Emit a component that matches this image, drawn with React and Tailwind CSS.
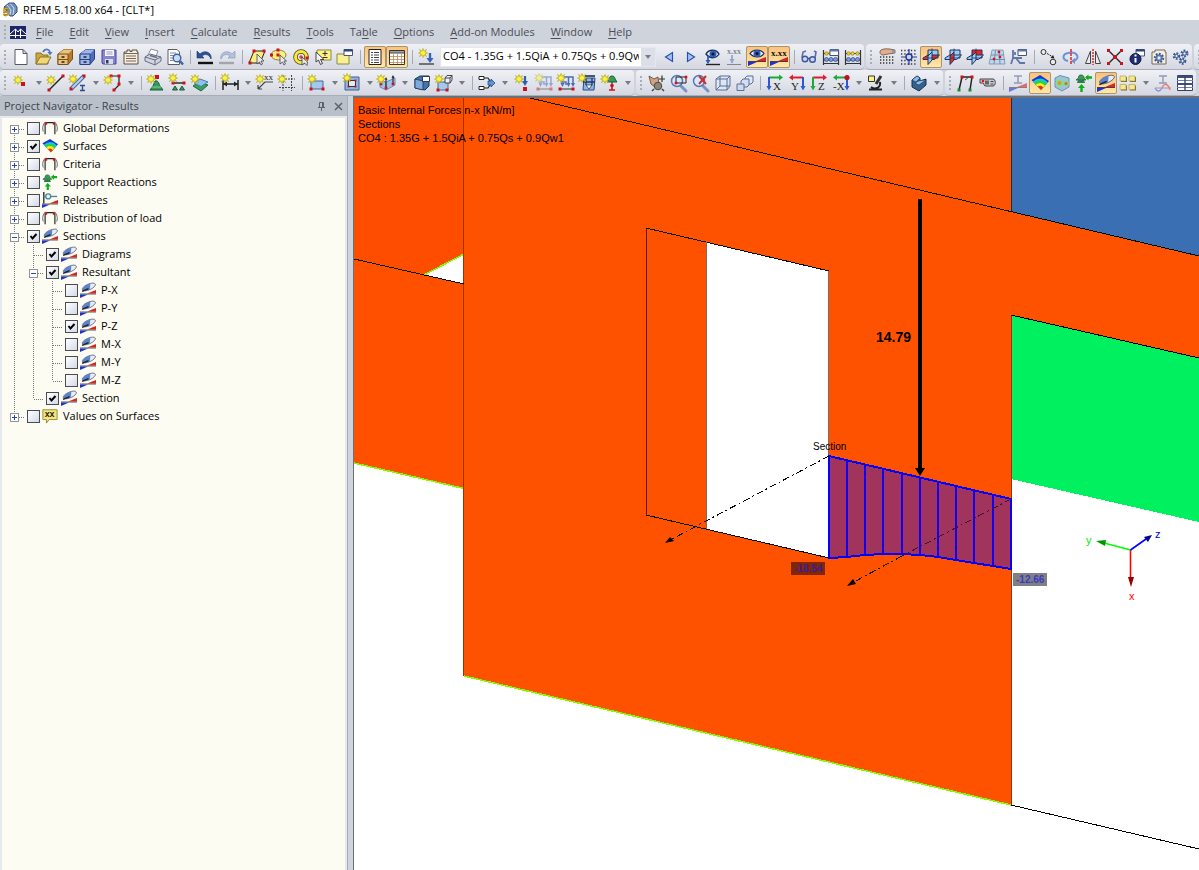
import React from 'react';
import clsx from 'clsx';

const Star = ({ x = 5, y = 5 }) => (
  <path
    transform={`translate(${x} ${y})`}
    d="M0-4.5L1-1.8L3.5-3.5L2-1L4.5 0L2 1L3.5 3.5L1 1.8L0 4.5L-1 1.8L-3.5 3.5L-2 1L-4.5 0L-2-1L-3.5-3.5L-1-1.8Z"
    fill="#fff23a"
    stroke="#b3a924"
    strokeWidth="0.7"
  />
);

const Dot = ({ x, y, s = 3, fill = '#d0101c' }) => (
  <rect x={x - s / 2} y={y - s / 2} width={s} height={s} fill={fill} />
);

const Slope = ({ y = 14 }) => (
  <>
    <path d={`M2 ${y + 5}V${y + 1}H11Z`} fill="#2030d8" />
    <path d={`M20 ${y - 4}V${y}H10Z`} fill="#e02020" />
    <path d={`M2 ${y + 0.5}H20`} stroke="#444" />
  </>
);

const Cabinet = ({ light, mid, dark }) => (
  <>
    <path d="M4 8L10 3.5H18.5V13L14 18.5H4Z" fill={mid} stroke={dark} />
    <path d="M4 8L10 3.5H18.5L14 8Z" fill={light} />
    <path d="M4 8H14V18.5H4Z" fill={light} stroke={dark} />
    <path d="M4 13.5H14" stroke={dark} />
    <path d="M7.5 11H10.5M7.5 16H10.5" stroke="#222" strokeWidth="1.6" />
  </>
);

const Planes = ({ a = '#9ccbf2', b = '#9ccbf2', c = '#9ccbf2' }) => (
  <>
    <path d="M8 4H18V12H8Z" fill={a} stroke="#1d3560" />
    <path d="M3 12L8 9H19.5L14.5 13.5H3Z" fill={b} stroke="#1d3560" />
    <path d="M8 10L12 6V14L8 18.5Z" fill={c} stroke="#1d3560" />
    <path d="M12 6V2.5M8 12H16" stroke="#1d3560" strokeWidth="0.8" />
  </>
);

const Lens = () => (
  <>
    <path d="M13 14L18 19" stroke="#7a93c4" strokeWidth="3" strokeLinecap="round" />
    <circle cx="9" cy="9" r="5.5" fill="#dbe8fa" stroke="#5a79b3" strokeWidth="1.5" />
  </>
);

const Abacus = () => (
  <>
    <path d="M3.5 4V19M18.5 4V19M3 7.5H19M3 14H19M3 17.5H19" stroke="#333" strokeWidth="1.2" />
    <circle cx="6.5" cy="7.5" r="1.7" fill="#f2d02c" stroke="#7b6a10" strokeWidth="0.6" />
    <circle cx="10.5" cy="7.5" r="1.7" fill="#f2d02c" stroke="#7b6a10" strokeWidth="0.6" />
    <circle cx="15.5" cy="7.5" r="1.7" fill="#f2d02c" stroke="#7b6a10" strokeWidth="0.6" />
    <circle cx="6.5" cy="13.5" r="2" fill="#7f9ee0" stroke="#2a4388" strokeWidth="0.7" />
    <circle cx="11" cy="13.5" r="2" fill="#7f9ee0" stroke="#2a4388" strokeWidth="0.7" />
    <circle cx="15.5" cy="13.5" r="2" fill="#7f9ee0" stroke="#2a4388" strokeWidth="0.7" />
  </>
);

const Loads = ({ dim }) => (
  <g opacity={dim ? 0.5 : 1}>
    <path d="M9 5H18V13M13.5 5V13M6 10H11V13" stroke="#4a6cb8" strokeWidth="1.5" fill="none" />
    <path d="M11.5 11L13.5 15L15.5 11ZM16 11L18 15L20 11ZM5.5 11L7.5 15L9.5 11Z" fill="#4a6cb8" />
    <path d="M5 17H18" stroke="#333" />
    <Dot x={5} y={17} />
    <Dot x={18} y={17} />
    <Star x={6} y={6} />
  </g>
);

const Axis = ({ label, h, v, flip, x }) => (
  <>
    <path d={flip ? 'M17 5.5H5' : 'M5 5.5H17'} stroke={h} strokeWidth="2" />
    <path d={flip ? 'M3 5.5L7 2.5V8.5Z' : 'M19 5.5L15 2.5V8.5Z'} fill={h} />
    <path d={flip ? 'M17 5V15' : 'M5 5V15'} stroke={v} strokeWidth="2" />
    <path d={flip ? 'M14.5 14H19.5L17 18.5Z' : 'M2.5 14H7.5L5 18.5Z'} fill={v} />
    <text x={x} y="18" fontSize="11" fontFamily="Liberation Serif, serif" fill="#222">{label}</text>
  </>
);

const SupportShape = () => (
  <>
    <path d="M8 3C10 3 11 4 11 6L13 8H3L5.5 6C5.5 4 6 3 8 3Z" fill="#3c9a5b" stroke="#1f5d35" strokeWidth="0.8" />
    <path d="M5 8L4 11H12L11 8Z" fill="#2e7d48" />
    <path d="M13 5.5H19M8.5 20V14" stroke="#0fae14" strokeWidth="2.4" />
    <path d="M12 5.5L15.5 2.5V8.5ZM5 16L8.5 12L12 16Z" fill="#0fae14" />
  </>
);

const Rainbow = () => (
  <>
    <path d="M2.5 8L11 3L20 9L12 18Z" fill="#1737d0" />
    <path d="M3.8 9.5Q12 3 18.7 10.3L12 18Z" fill="#19c4e0" />
    <path d="M5 10.8Q12 6 17.4 11.8L12 18Z" fill="#2bd42f" />
    <path d="M6.8 12.5Q12 9 15.8 13.5L12 18Z" fill="#f6ec1c" />
    <path d="M8.8 14.6Q12 12.5 14.2 15.5L12 18Z" fill="#ee2a12" />
  </>
);

const Blade = () => (
  <>
    <Slope y={15} />
    <g transform="rotate(-24 11 8)">
      <ellipse cx="12" cy="8" rx="8" ry="3.2" fill="#e6ecfa" stroke="#555b68" strokeWidth="0.8" />
      <path d="M4 8C5 5 11 4 15 5.5L12 10.8C8 11.5 5 10 4 8Z" fill="#5e82cc" />
      <path d="M3 9.5H11" stroke="#222" strokeWidth="1.6" />
    </g>
  </>
);

const Frame = () => (
  <>
    <path d="M5.5 18V8C5.5 6 6 5 8 5H14C16 5 16.5 6 16.5 8V18" fill="none" stroke="#222" strokeWidth="1.3" />
    <path d="M3.5 15C2 11 3 7 6 4M18.5 15C20 11 19 7 16 4" fill="none" stroke="#444" strokeWidth="0.9" />
    <Dot x={6.5} y={6} s={2.6} />
    <Dot x={15.5} y={6} s={2.6} />
  </>
);

const Gear = ({ x, y, r = 4, fill = '#6f8fc8' }) => (
  <>
    <circle cx={x} cy={y} r={r} fill="none" stroke="#3a5590" strokeWidth="2" strokeDasharray="1.8 1.4" />
    <circle cx={x} cy={y} r={r - 1} fill={fill} stroke="#3a5590" strokeWidth="0.8" />
    <circle cx={x} cy={y} r={r / 3} fill="#eef3fb" />
  </>
);

// 22 x 22 drawings, one per toolbar command
const ICONS = {
  new: <path d="M5 3.5H13L17 7.5V18.5H5ZM13 3.5V7.5H17" fill="#fff" stroke="#55585f" />,
  open: (
    <>
      <path d="M4 18V7H9L11 9H16V18Z" fill="#c9a93e" stroke="#8a7328" />
      <path d="M4 18L8 11H19L15 18Z" fill="#f0d777" stroke="#8a7328" />
      <path d="M11 6C13 2 17 3 18 6" stroke="#5577b5" strokeWidth="1.8" fill="none" />
      <path d="M15.5 6H20.5L18 9.5Z" fill="#5577b5" />
    </>
  ),
  cabinet: <Cabinet light="#edc27c" mid="#b87b2e" dark="#7a4f17" />,
  cabinetBlue: <Cabinet light="#9fb6ea" mid="#4f6fbd" dark="#283f86" />,
  save: (
    <>
      <path d="M4 4H18V18H5L4 17Z" fill="#8a83cf" stroke="#4b458d" />
      <path d="M7 4H16V10H7Z" fill="#f4f6fb" />
      <path d="M8.5 6H14.5M8.5 8H14.5" stroke="#9aa0b5" />
      <path d="M7 13H15V18H7Z" fill="#d8dbe8" />
      <path d="M8 14H10.5V17.5H8Z" fill="#333a60" />
    </>
  ),
  book: (
    <>
      <path d="M4 6H7V4H10V5.5H12V4H17V6H18V18H4Z" fill="#f6efdf" stroke="#5c4e40" />
      <path d="M4 7.5H18M6 10H16M6 12.5H16M6 15H16" stroke="#75675a" />
    </>
  ),
  print: (
    <>
      <path d="M6 9L9 3L16 5L14 10Z" fill="#fff" stroke="#8a8d98" />
      <path d="M3 11L8 8L19 11V15L13 19L3 15Z" fill="#d3d6e2" stroke="#6a6d80" />
      <path d="M3 11L13 14L19 11" stroke="#6a6d80" fill="none" />
      <path d="M13 14V19" stroke="#6a6d80" />
      <path d="M8 9.5L15 11.5" stroke="#6a6d80" strokeWidth="1.4" />
    </>
  ),
  preview: (
    <>
      <path d="M4 3.5H13L15.5 6V18.5H4Z" fill="#fff" stroke="#5b5e68" />
      <path d="M6 7H12M6 9.5H11M6 12H9M6 14.5H9" stroke="#7b86a4" />
      <circle cx="13" cy="12" r="3.8" fill="#c5dcf7" stroke="#41639f" strokeWidth="1.4" />
      <path d="M16 15L19 18.5" stroke="#41639f" strokeWidth="2.4" />
    </>
  ),
  undo: (
    <>
      <path d="M3 5V12H10L8 10C11 7.5 15 8 17 13C18.5 7 11 3 6 8Z" fill="#2d5296" stroke="#1b3566" strokeWidth="0.6" />
      <path d="M4 17H19" stroke="#111" strokeWidth="2.4" />
    </>
  ),
  redo: (
    <>
      <path d="M19 5V12H12L14 10C11 7.5 7 8 5 13C3.5 7 11 3 16 8Z" fill="#b5c2da" stroke="#7f90b0" strokeWidth="0.6" />
      <path d="M3 17H18" stroke="#a3a5ac" strokeWidth="2.4" />
    </>
  ),
  selectRhomb: (
    <>
      <path d="M8 5H19L14 17H3Z" fill="#fbef7e" stroke="#222" />
      <Dot x={8} y={5} /><Dot x={18} y={5} /><Dot x={4} y={17} />
      <path d="M11 8V18L13.5 16L15 19L16.5 18L15 15L18 15Z" fill="#e9e9ee" stroke="#444" strokeWidth="0.8" />
    </>
  ),
  selectEllipse: (
    <>
      <ellipse cx="10.5" cy="9" rx="7.5" ry="5" fill="#fbef7e" stroke="#8c8332" />
      <Dot x={10} y={9} /><Dot x={3.5} y={9} /><Dot x={10} y={4} />
      <path d="M12 9V18L14.5 16L16 19L17.5 18L16 15L18.5 15Z" fill="#e9e9ee" stroke="#444" strokeWidth="0.8" />
    </>
  ),
  selectRing: (
    <>
      <circle cx="11" cy="11" r="5.5" fill="none" stroke="#4a441a" strokeWidth="4.5" />
      <circle cx="11" cy="11" r="5.5" fill="none" stroke="#f8e83a" strokeWidth="3" />
      <path d="M11 9V13M9 11H13" stroke="#d0101c" />
      <Dot x={17} y={12} />
      <path d="M12 11V19L14.5 17L17 19.5L17.5 16Z" fill="#e9e9ee" stroke="#444" strokeWidth="0.8" />
    </>
  ),
  selectBox: (
    <>
      <path d="M5 4H19V14H5Z" fill="#fff37d" stroke="#8c8648" />
      <path d="M13 5V10M10.5 7.5H15.5M10.5 11.5H15.5" stroke="#333" />
      <path d="M4 6V16L6.5 14L8.5 18.5L10.5 17.5L8.5 13.5H12Z" fill="#f4f4f8" stroke="#333" strokeWidth="0.9" />
    </>
  ),
  selectLayer: (
    <>
      <path d="M3 8H15V18H3Z" fill="#f9f094" stroke="#8c8648" />
      <path d="M10 3.5H18.5V9.5H10Z" fill="#fff" stroke="#4a5470" />
      <path d="M10 4.5H18.5" stroke="#2c4372" strokeWidth="2" />
    </>
  ),
  list: (
    <>
      <path d="M5 3.5H17V18.5H5Z" fill="#fff" stroke="#222" />
      <path d="M7 6.5H9M7 9H9M7 11.5H9M7 14H9M7 16.5H9M10 6.5H15M10 9H15M10 11.5H15M10 14H15M10 16.5H15" stroke="#444" />
    </>
  ),
  table: (
    <>
      <path d="M3.5 4.5H18.5V18.5H3.5Z" fill="#fff" stroke="#333" />
      <path d="M4 6.5H18" stroke="#777" strokeWidth="2.4" />
      <path d="M4 10.5H18M4 13.5H18M4 16.5H18M7.5 8V18M11.5 8V18M15.5 8V18" stroke="#b98a55" strokeWidth="0.8" />
    </>
  ),
  loadCase: (
    <>
      <Star x={7} y={7} />
      <path d="M14 7V15" stroke="#3a63b5" strokeWidth="2.4" />
      <path d="M10.5 12H17.5L14 17Z" fill="#3a63b5" />
      <path d="M3 18H18" stroke="#444" strokeWidth="1.4" />
    </>
  ),
  prev: <path d="M7.5 11L14.5 6.5V15.5Z" fill="#a5c4f4" stroke="#2a4fae" strokeWidth="1.2" />,
  next: <path d="M14.5 11L7.5 6.5V15.5Z" fill="#a5c4f4" stroke="#2a4fae" strokeWidth="1.2" />,
  eyeLoad: (
    <>
      <path d="M4 8C7 3 14 3 17 8C14 13 8 13 4 8Z" fill="#eaf1fb" stroke="#1b2f5c" strokeWidth="1.4" />
      <circle cx="11" cy="8" r="3.5" fill="#2f5fb5" />
      <circle cx="11" cy="8" r="1.5" fill="#0a1430" />
      <path d="M6 10V17" stroke="#2f5fb5" strokeWidth="1.8" />
      <path d="M3.5 14H8.5L6 18Z" fill="#2f5fb5" />
      <path d="M4 18.5H18" stroke="#222" strokeWidth="1.4" />
    </>
  ),
  valueLoad: (
    <g opacity="0.55">
      <text x="3" y="8" fontSize="8" fontFamily="Liberation Serif, serif" fontWeight="bold" fill="#333">x.xx</text>
      <path d="M8 9V17" stroke="#5a76b0" strokeWidth="1.8" />
      <path d="M5.5 13H10.5L8 17.5Z" fill="#5a76b0" />
      <path d="M3 18.5H17" stroke="#444" />
    </g>
  ),
  eyeResult: (
    <>
      <Slope y={15} />
      <path d="M4 7.5C7 3 15 3 18 7.5C15 12 8 12 4 7.5Z" fill="#eaf1fb" stroke="#1b2f5c" strokeWidth="1.2" />
      <circle cx="11" cy="7.5" r="3.5" fill="#2f5fb5" />
      <circle cx="11" cy="7.5" r="1.5" fill="#0a1430" />
    </>
  ),
  valueResult: (
    <>
      <Slope y={15} />
      <text x="3" y="10" fontSize="9" fontFamily="Liberation Serif, serif" fontWeight="bold" fill="#111">x.xx</text>
    </>
  ),
  glasses: (
    <>
      <path d="M4 12L5 6L8 5M17 12L18 6L16 5" fill="none" stroke="#5a6fa8" strokeWidth="1.6" />
      <path d="M9.5 12.5H12" stroke="#32498c" strokeWidth="1.4" />
      <circle cx="7" cy="13" r="2.8" fill="#c7d8f4" stroke="#3f569a" strokeWidth="1.4" />
      <circle cx="14.5" cy="13.5" r="2.8" fill="#c7d8f4" stroke="#3f569a" strokeWidth="1.4" />
    </>
  ),
  abacusWin: (
    <>
      <Abacus />
      <path d="M10 3.5H18.5V9.5H10Z" fill="#fff" stroke="#4a5470" />
      <path d="M10 4.5H18.5" stroke="#5b76a8" strokeWidth="2" />
    </>
  ),
  abacus: <Abacus />,
  handGrid: (
    <>
      <path d="M4 11H19M4 14H19M4 17H19" stroke="#333" strokeWidth="1.3" strokeDasharray="1.3 1.7" />
      <path d="M5 4C9 2 14 3 19 4V7L12 8L7 9C4 9 3 6 5 4Z" fill="#e0ae8c" stroke="#6d4a36" strokeWidth="0.8" />
      <path d="M16 4H19V7H16Z" fill="#8a94ad" />
    </>
  ),
  snapGrid: (
    <>
      <path d="M3 4.5H19M3 8H19M3 14.5H19M3 18H19" stroke="#333" strokeWidth="1.3" strokeDasharray="1.3 2" />
      <path d="M11 3V19M3 11H19" stroke="#26379b" strokeWidth="1.2" />
      <circle cx="11" cy="11" r="3" fill="#c8d8f6" stroke="#26379b" strokeWidth="1.4" />
    </>
  ),
  planeXY: <Planes b="#e52b2b" />,
  planeYZ: <Planes c="#e52b2b" />,
  planeXZ: <Planes a="#f02020" />,
  grid3d: (
    <>
      <path d="M6 4L3 18H19L17 4Z" fill="#bcd8f0" stroke="#7b8ea5" strokeWidth="0.8" />
      <path d="M9.5 4L8 18M13 4L14 18M5 9H18M4 13.5H19" stroke="#7b8ea5" />
      <Dot x={13} y={6} s={2.4} /><Dot x={14} y={11} s={2.4} /><Dot x={8} y={13} s={2.4} />
    </>
  ),
  planeEdit: (
    <>
      <path d="M5 4V12H14M5 12L3 18M7 9V6M8 12L12 17H17" fill="none" stroke="#6075a8" strokeWidth="1.8" />
      <path d="M10 3.5H18.5V9.5H10Z" fill="#fff" stroke="#4a5470" />
      <path d="M10 4.5H18.5" stroke="#5b76a8" strokeWidth="2" />
    </>
  ),
  moveNode: (
    <>
      <circle cx="5.5" cy="6" r="2.5" fill="#e8eaf0" stroke="#333" />
      <circle cx="15" cy="16" r="2.8" fill="#e8eaf0" stroke="#333" />
      <path d="M9 7.5L15 11" stroke="#222" strokeDasharray="2 1" />
      <path d="M16.5 12.5L12.5 12L15 9Z" fill="#222" />
    </>
  ),
  rotate: (
    <>
      <path d="M8 15C2 14 2 8 8 7C17 5 21 12 14 15" fill="none" stroke="#6d92d4" strokeWidth="2" />
      <path d="M15 12V18L11 15Z" fill="#6d92d4" />
      <path d="M11 3V19" stroke="#e01818" strokeWidth="1.4" strokeDasharray="3 1" />
    </>
  ),
  mirror: (
    <>
      <path d="M8.5 5V17.5H3.5Z" fill="#e8eaf0" stroke="#444" />
      <path d="M13.5 5V17.5H18.5Z" fill="#e8eaf0" stroke="#444" />
      <path d="M11 3V19" stroke="#e01818" strokeWidth="1.4" strokeDasharray="2 1" />
    </>
  ),
  connect: (
    <>
      <path d="M4 4L18 18M18 4L4 18" stroke="#222" strokeWidth="1.4" />
      <Dot x={4.5} y={4.5} /><Dot x={17.5} y={4.5} /><Dot x={4.5} y={17.5} /><Dot x={17.5} y={17.5} />
      <Dot x={11} y={11} s={4} />
    </>
  ),
  info: (
    <>
      <path d="M10 3.5H18.5V10H10Z" fill="#fff" stroke="#4a5470" />
      <path d="M10 4.5H18.5" stroke="#2c4372" strokeWidth="2" />
      <circle cx="9.5" cy="13" r="5.5" fill="#1f2c6e" stroke="#0e173f" />
      <path d="M9.5 12V16.5M9.5 8.5V10.5" stroke="#fff" strokeWidth="2" />
    </>
  ),
  settingsBook: (
    <>
      <path d="M4 6H7V4H17V6H18V18H4Z" fill="#f6efdf" stroke="#75685a" />
      <Gear x={11} y={12} r={4.2} />
    </>
  ),
  gears: (
    <>
      <Gear x={6.5} y={10} r={2.8} />
      <Gear x={14.5} y={7.5} r={3} />
      <Gear x={12.5} y={15} r={2.8} />
    </>
  ),
  node: (<><Star x={8} y={8} /><Dot x={13} y={12} s={4} /></>),
  line: (
    <>
      <path d="M4 18L18 4" stroke="#222" strokeWidth="1.4" />
      <Dot x={4} y={18} /><Dot x={18} y={4} />
      <Star x={6} y={8} />
    </>
  ),
  member: (
    <>
      <path d="M4 17L17 4" stroke="#47669e" strokeWidth="4" />
      <path d="M4 17L17 4" stroke="#b9d3f4" strokeWidth="2" />
      <Dot x={4} y={17} /><Dot x={17} y={4} />
      <path d="M13 13.5H18M13 18.5H18M15.5 13.5V18.5" stroke="#2c4d92" strokeWidth="1.4" />
      <Star x={6} y={7} />
    </>
  ),
  polyline: (
    <>
      <path d="M8 4H17V13L12 18" fill="none" stroke="#222" strokeWidth="1.2" />
      <Dot x={9} y={4} /><Dot x={17} y={4} /><Dot x={17} y={12} /><Dot x={12} y={18} />
      <Star x={6} y={8} />
    </>
  ),
  nodalSupport: (
    <>
      <path d="M10 9C14 8 14 13 15 14L18 18H5L8 14Z" fill="#37995c" stroke="#1c5c33" />
      <path d="M6 15H16" stroke="#7fd49b" />
      <Dot x={12} y={5} s={4} />
      <Star x={6} y={7} />
    </>
  ),
  lineSupport: (
    <>
      <path d="M5 11H18" stroke="#222" strokeWidth="1.4" />
      <Dot x={6} y={11} /><Dot x={17} y={11} />
      <path d="M8 14L10.5 18H5.5ZM15 14L17.5 18H12.5Z" fill="#37995c" stroke="#1c5c33" />
      <Star x={6} y={6} />
    </>
  ),
  surfaceSupport: (
    <>
      <path d="M4 14L10 10L19 13L12 19Z" fill="#37a05c" stroke="#1c6b38" />
      <path d="M5 11L11 7L19 10L12 14.5Z" fill="#8dc2ee" stroke="#4a7cb4" />
      <Star x={6} y={7} />
    </>
  ),
  dimension: (
    <>
      <path d="M4 8V18M19 8V18M4 12H19" stroke="#222" strokeWidth="1.5" />
      <path d="M4 12L8 9.5V14.5ZM19 12L15 9.5V14.5Z" fill="#222" />
      <text x="9" y="9" fontSize="9" fontWeight="bold" fontFamily="Liberation Sans, sans-serif">x</text>
      <Star x={6} y={6} />
    </>
  ),
  comment: (
    <>
      <path d="M4 17L11 10H19M4 17V13M4 17H8" stroke="#444" fill="none" strokeWidth="1.2" />
      <text x="10" y="8" fontSize="9" fontFamily="Liberation Serif, serif" fill="#222">xx</text>
      <Star x={6} y={7} />
    </>
  ),
  guides: (
    <>
      <path d="M7 3V19M15.5 3V19M3 7H19M3 15.5H19" stroke="#444" strokeDasharray="2 1" />
      <Star x={6} y={7} />
    </>
  ),
  surface: (
    <>
      <path d="M5 9H17V17H5Z" fill="#a5c9ec" stroke="#47699c" />
      <Dot x={5} y={17} /><Dot x={17} y={17} />
      <Star x={6} y={7} />
    </>
  ),
  opening: (
    <>
      <path d="M4 5H18V18H4Z" fill="#8fb6e0" stroke="#3f6192" />
      <path d="M7.500 8.500H14.500V14.500H7.500Z" fill="#e6eaf3" stroke="#333" />
      <Dot x={7.5} y={8.5} s={2} /><Dot x={14.5} y={8.5} s={2} /><Dot x={7.5} y={14.5} s={2} /><Dot x={14.5} y={14.5} s={2} />
      <Star x={6} y={6} />
    </>
  ),
  rotateSurface: (
    <>
      <path d="M4 8L10 10V18L4 15ZM10 10L19 6V13L10 18Z" fill="#9fc2e8" stroke="#6a8ab5" />
      <path d="M10 6V15M17 4V12" stroke="#333" strokeWidth="1.2" />
      <path d="M8.5 8H11.500L10 5ZM15.500 6H18.500L17 3Z" fill="#333" />
      <Dot x={10} y={16} s={2.6} /><Dot x={5} y={12} s={2.6} /><Dot x={17} y={12} s={2.6} />
      <Star x={5} y={7} />
    </>
  ),
  solid: (
    <>
      <path d="M4 7L9 4H18V14L14 18L4 16Z" fill="#4673ac" stroke="#183458" />
      <path d="M4 7L12 9V18L4 16Z" fill="#7ea9dc" stroke="#183458" strokeWidth="0.8" />
      <path d="M11.5 4.5H18.5V9.5H11.5Z" fill="#fff" stroke="#333b52" />
    </>
  ),
  solidNew: (
    <>
      <path d="M5 10H15V18H5Z" fill="#a5c9ec" stroke="#47699c" />
      <path d="M12 6L14 3.5H19V8L17 11H12ZM12 6H17V11M17 6L19 3.5" fill="#eef3fa" stroke="#333" strokeWidth="0.9" />
      <Dot x={5} y={18} /><Dot x={14} y={18} />
      <Star x={6} y={7} />
    </>
  ),
  merge: (
    <>
      <path d="M3 4.5H8V7.5H3ZM3 14.5H8V17.500H3Z" fill="#fff" stroke="#222" />
      <path d="M8 6H12L14 9M8 16H12L14 13" fill="none" stroke="#222" strokeWidth="1.2" />
      <path d="M12 9H15V7L19 11L15 15V13H12Z" fill="#5b95dc" stroke="#1f4c8c" strokeWidth="0.8" />
    </>
  ),
  nodalLoad: (
    <>
      <path d="M14 4V11" stroke="#2f5fb5" strokeWidth="2.2" />
      <path d="M11 9H17L14 14Z" fill="#2f5fb5" />
      <Dot x={14} y={17} s={4} />
      <Star x={8} y={7} />
    </>
  ),
  memberLoad: <Loads dim />,
  lineLoad: <Loads />,
  surfaceLoad: (
    <>
      <path d="M7 6H18L17 18H6Z" fill="#8fb6e6" stroke="#2a4a7e" />
      <path d="M6 10H18M9 6V13M15 6V13" stroke="#23385f" strokeWidth="1.3" />
      <path d="M9 13H15L12 17Z" fill="#fff" stroke="#12233f" strokeWidth="0.7" />
      <path d="M8 4H18" stroke="#12233f" strokeWidth="1.5" />
      <Star x={5} y={6} />
    </>
  ),
  imposed: (
    <>
      <path d="M10 7C10 3 16 3 16 7L18 10H8Z" fill="#37995c" stroke="#1c5c33" />
      <path d="M13 10V14" stroke="#222" />
      <circle cx="13" cy="13.5" r="1.8" fill="#d0101c" />
      <path d="M10 18H16M13 13V18" stroke="#d0101c" strokeWidth="1.6" />
      <Star x={6} y={7} />
    </>
  ),
  pan: (
    <>
      <path d="M3 4L8 7L12 5L13 12L9 15L5 12Z" fill="#cfa582" stroke="#6d4a36" strokeWidth="0.9" />
      <path d="M16 3.500V10M13 7H19" stroke="#333" strokeWidth="1.2" />
      <circle cx="12" cy="14" r="3.8" fill="#8c867c" stroke="#4d4942" />
      <path d="M8 17L6 19M16 17L18 19" stroke="#444" strokeWidth="1.5" />
    </>
  ),
  zoomWindow: (<><Lens /><path d="M8 5H18V11H8Z" fill="none" stroke="#222" /><Dot x={8} y={11} s={2.6} /><Dot x={18} y={5} s={2.6} /></>),
  zoomOff: (<><Lens /><path d="M9 4L16 12M16 4L9 12" stroke="#c83030" strokeWidth="2" /></>),
  cube: (
    <path d="M4 7L8 4H18V14L15 18H4ZM4 7H15V18M15 7L18 4M8 4V14H18M4 18L8 14" fill="#dfe7f5" stroke="#5c6e95" />
  ),
  boxes: (
    <>
      <path d="M11 6L13 4H19V10L17 12H11Z" fill="#e0e7f5" stroke="#5c6e95" />
      <path d="M7 9L9 7H15V13L13 15H7Z" fill="#d5def0" stroke="#5c6e95" />
      <path d="M3 12H10V18.500H3Z" fill="#cfd9ee" stroke="#5c6e95" />
    </>
  ),
  viewX: <Axis label="X" h="#1fa83c" v="#2b57d8" x={9} />,
  viewY: <Axis label="Y" h="#dc2030" v="#2b57d8" flip x={5} />,
  viewZ: <Axis label="Z" h="#dc2030" v="#1fa83c" x={10} />,
  viewMinusX: (
    <>
      <Axis label="-X" h="#1fa83c" v="#2b57d8" flip x={3} />
      <circle cx="17" cy="5.5" r="2.6" fill="#c01020" />
    </>
  ),
  microscope: (
    <>
      <path d="M4 17.5H17M6 15C10 18 16 16 15 10" fill="none" stroke="#222" strokeWidth="2" />
      <path d="M16 4L11 12" stroke="#333" strokeWidth="3" />
      <path d="M3.5 4H9.5V9.5H3.5Z" fill="#fff37d" stroke="#333" />
    </>
  ),
  clip: (
    <>
      <path d="M4 8L9 4L12 6V9L18 7V13L11 19L4 15Z" fill="#35628f" stroke="#15304f" />
      <path d="M4 8L9 4L12 6L8 10Z" fill="#8dbce6" stroke="#15304f" strokeWidth="0.6" />
      <path d="M8 10L12 8.500L18 8L11 13L8 12Z" fill="#8dbce6" stroke="#15304f" strokeWidth="0.6" />
    </>
  ),
  frame: (
    <>
      <path d="M4 18L7 5H17L15 18" fill="none" stroke="#222" strokeWidth="1.5" />
      <path d="M10 8L14 5" stroke="#555" />
      <Dot x={7} y={5} /><Dot x={17} y={5} />
      <Dot x={4} y={18} fill="#188a2c" /><Dot x={15} y={18} fill="#188a2c" />
    </>
  ),
  record: (
    <>
      <path d="M3 7H16C19 7 19 14 16 14H8L6 11H3Z" fill="#c9cad2" stroke="#444" />
      <path d="M8 8.500H12V12.500H8Z" fill="#666" />
      <circle cx="6" cy="9" r="1.3" fill="#e11" />
      <path d="M13.500 9.500H16.500M13.500 12H16.500" stroke="#444" />
    </>
  ),
  memberResult: (
    <g opacity="0.6">
      <path d="M7 4H15M11 4V11M7 11H15" stroke="#5c6e95" strokeWidth="1.6" />
      <Slope y={15} />
    </g>
  ),
  surfaceResult: <Rainbow />,
  solidResult: (
    <>
      <path d="M4 6L9 3.5L18 6V15L11 19L4 15Z" fill="#9dc3d8" stroke="#6c93ad" />
      <circle cx="8.5" cy="11" r="3.8" fill="#7fe08a" />
      <circle cx="8.5" cy="11" r="2" fill="#f28a3a" />
      <circle cx="15" cy="11.5" r="2.8" fill="#7fe08a" />
      <circle cx="15" cy="11.5" r="1.5" fill="#e85a3a" />
    </>
  ),
  supportResult: <SupportShape />,
  sectionResult: <Blade />,
  panels: (
    <>
      <path d="M4 5H10V10H4ZM13 5H19V10H13ZM4 13.5H10V18.5H4ZM13 13.5H19V18.5H13Z" fill="#7a6d2c" />
      <path d="M3 4H9V9H3ZM12 4H18V9H12ZM3 12.5H9V17.5H3ZM12 12.5H18V17.5H12Z" fill="#f6e68c" stroke="#a89a4a" strokeWidth="0.6" />
    </>
  ),
  waveResult: (
    <>
      <path d="M7 4H15M11 4V11M7 11H15" stroke="#8f9bb5" strokeWidth="1.4" />
      <path d="M3 16H19" stroke="#9a9da8" />
      <path d="M3 16C5 20 8 20 10 16" fill="none" stroke="#8c8ce6" strokeWidth="1.3" />
      <path d="M10 16C12 11 16 11 18 18" fill="none" stroke="#e67c7c" strokeWidth="1.3" />
    </>
  ),
  tables: (
    <>
      <path d="M3.5 3.5H18.5V18.5H3.5Z" fill="#fff" stroke="#3a4260" />
      <path d="M3 5H19M3 12H19" stroke="#3c4c84" strokeWidth="2" />
      <path d="M3 8.500H19M3 15.500H19" stroke="#6c7cb4" />
      <path d="M11 3V19" stroke="#3a4260" strokeWidth="1.4" />
    </>
  ),
};

// "|" separator, "v" drop-down arrow, "*" in front of a pressed button
const FILE_BAR = ['new', 'open', 'cabinet', 'cabinetBlue', 'save', 'book', 'print', 'preview', '|', 'undo', 'redo', '|', 'selectRhomb', 'selectEllipse', 'selectRing', 'selectBox', 'selectLayer', '|', '*list', '*table', '|', 'loadCase', 'combo', 'prev', 'next', 'eyeLoad', 'valueLoad', '*eyeResult', '*valueResult', '|', 'glasses', 'abacusWin', 'abacus'];
const PLANE_BAR = ['handGrid', 'snapGrid', '*planeXY', 'planeYZ', 'planeXZ', 'grid3d', 'planeEdit', '|', 'moveNode', 'rotate', 'mirror', 'connect', 'info', 'settingsBook', 'gears'];
const INSERT_BAR = ['node', 'v', 'line', 'member', 'v', 'polyline', 'v', '|', 'nodalSupport', 'lineSupport', 'surfaceSupport', '|', 'dimension', 'v', 'comment', 'guides', '|', 'surface', 'v', 'opening', 'v', 'rotateSurface', 'v', 'solid', 'solidNew', 'v', '|', 'merge', 'v', 'nodalLoad', 'memberLoad', 'lineLoad', 'surfaceLoad', 'imposed', 'v'];
const VIEW_BAR = ['pan', 'zoomWindow', 'zoomOff', 'cube', 'boxes', '|', 'viewX', 'viewY', 'viewZ', 'viewMinusX', 'v', 'microscope', 'v', '|', 'clip', 'v'];
const RESULT_BAR = ['frame', 'record', '|', 'memberResult', '*surfaceResult', 'solidResult', 'supportResult', '*sectionResult', 'panels', 'v', 'waveResult', 'tables'];

const MENU = [
  ['', 'F', 'ile'], ['', 'E', 'dit'], ['', 'V', 'iew'], ['', 'I', 'nsert'], ['', 'C', 'alculate'], ['', 'R', 'esults'],
  ['', 'T', 'ools'], ['Ta', 'b', 'le'], ['', 'O', 'ptions'], ['', 'A', 'dd-on Modules'], ['', 'W', 'indow'], ['', 'H', 'elp'],
];

// guides: one letter per 19px column
// l line, t tee, e end, f first expander, + closed, - open, _ last expander
const TREE = [
  { guides: 'f', icon: 'frame', label: 'Global Deformations' },
  { guides: '+', icon: 'surface', label: 'Surfaces', on: true },
  { guides: '+', icon: 'frame', label: 'Criteria' },
  { guides: '+', icon: 'support', label: 'Support Reactions' },
  { guides: '+', icon: 'release', label: 'Releases' },
  { guides: '+', icon: 'frame', label: 'Distribution of load' },
  { guides: '-', icon: 'section', label: 'Sections', on: true },
  { guides: 'lt', icon: 'section', label: 'Diagrams', on: true },
  { guides: 'l-', icon: 'section', label: 'Resultant', on: true },
  { guides: 'llt', icon: 'section', label: 'P-X' },
  { guides: 'llt', icon: 'section', label: 'P-Y' },
  { guides: 'llt', icon: 'section', label: 'P-Z', on: true },
  { guides: 'llt', icon: 'section', label: 'M-X' },
  { guides: 'llt', icon: 'section', label: 'M-Y' },
  { guides: 'lle', icon: 'section', label: 'M-Z' },
  { guides: 'le', icon: 'section', label: 'Section', on: true },
  { guides: '_', icon: 'values', label: 'Values on Surfaces' },
];

const TREE_ICONS = {
  frame: <Frame />,
  surface: <Rainbow />,
  support: <SupportShape />,
  release: (
    <>
      <Slope y={15} />
      <path d="M4 2V15" stroke="#333" strokeWidth="1.6" />
      <path d="M4 7H19" stroke="#4d8b96" strokeWidth="1.6" />
      <circle cx="9" cy="7" r="2.8" fill="#e6f3f5" stroke="#4d8b96" strokeWidth="1.5" />
    </>
  ),
  section: <Blade />,
  values: (
    <>
      <path d="M3 4H19V15H10L7 19V15H3Z" fill="#f5e678" stroke="#8f8433" />
      <text x="5" y="12.5" fontSize="10" fontWeight="bold" fontFamily="Liberation Sans, sans-serif" fill="#222">xx</text>
    </>
  ),
};

const Grip = () => (
  <span className="flex w-[10px] shrink-0 flex-col items-center gap-0.5">
    {[0, 1, 2, 3].map((i) => (
      <span key={i} className="size-0.5 bg-[#a9adb6]" />
    ))}
  </span>
);

const Combo = () => (
  <div className="mx-0.5 flex h-5 w-[216px] shrink-0 border border-[#e4e7ed] bg-white">
    <select
      aria-label="Load combination"
      className="min-w-0 flex-1 appearance-none overflow-hidden bg-white px-0.5 text-[11px] whitespace-nowrap text-black outline-none"
    >
      <option>CO4 - 1.35G + 1.5QiA + 0.75Qs + 0.9Qw1</option>
    </select>
    <span className="flex w-[14px] items-center justify-center bg-[#dcdfe7]">
      <svg viewBox="0 0 6 4" className="h-1 w-1.5"><path d="M0 0H6L3 4Z" fill="#777b84" /></svg>
    </span>
  </div>
);

const ToolItem = ({ item }) => {
  if (item === '|') {
    return <span className="flex w-2 shrink-0 justify-center"><span className="h-[14px] w-px bg-[#a6aab4]" /></span>;
  }
  if (item === 'v') {
    return (
      <button aria-label="More" className="flex h-[22px] w-[13px] shrink-0 items-center justify-center">
        <svg viewBox="0 0 6 4" className="h-1 w-1.5"><path d="M0 0H6L3 4Z" fill="#777b84" /></svg>
      </button>
    );
  }
  if (item === 'combo') return <Combo />;
  const active = item[0] === '*';
  const name = active ? item.slice(1) : item;
  return (
    <button
      aria-label={name}
      className={clsx(
        'size-[22px] shrink-0',
        active && 'rounded-xs bg-linear-to-b from-[#fbc07c] to-[#ffe9a8] outline outline-[#a8966f] -outline-offset-1'
      )}
    >
      <svg viewBox="0 0 22 22" fill="none" className="size-[22px]">{ICONS[name]}</svg>
    </button>
  );
};

const Bar = ({ items, label }) => (
  <div
    role="toolbar"
    aria-label={label}
    className="mr-0.5 flex h-[26px] shrink-0 items-center rounded-sm border-b border-[#a9adb7] bg-linear-to-b from-[#eff1f6] to-[#d5d8e1]"
  >
    <Grip />
    {items.map((item, i) => (
      <ToolItem key={i} item={item} />
    ))}
  </div>
);

const Guide = ({ kind }) => {
  const box = 'f+-_'.includes(kind);
  const from = kind === 'f' ? 10 : 0;
  const to = kind === 'e' || kind === '_' ? 10 : 18;
  return (
    <svg viewBox="0 0 19 18" className="h-[18px] w-[19px] shrink-0" shapeRendering="crispEdges">
      <path d={`M9.5 ${from}V${to}`} stroke="#777" strokeDasharray="1 1" />
      {kind !== 'l' && <path d="M10 10.5H19" stroke="#777" strokeDasharray="1 1" />}
      {box && (
        <>
          <rect x="5.5" y="6.5" width="8" height="8" fill="#fff" stroke="#8f939c" />
          <path d="M7 10.5H12" stroke="#2a4a9c" />
          {kind !== '-' && <path d="M9.5 8V13" stroke="#2a4a9c" />}
        </>
      )}
    </svg>
  );
};

const TreeRow = ({ row }) => (
  <li className="flex h-[18px] items-center">
    {row.guides.split('').map((kind, i) => (
      <Guide key={i} kind={kind} />
    ))}
    <label className="ml-[3px] flex items-center">
      <span className="grid">
        <input
          type="checkbox"
          defaultChecked={row.on}
          className="peer col-start-1 row-start-1 size-[13px] appearance-none border border-[#4a4c52] bg-linear-to-br from-white to-[#d4d9e6]"
        />
        <svg viewBox="0 0 13 13" className="pointer-events-none col-start-1 row-start-1 hidden size-[13px] peer-checked:block">
          <path d="M3.5 6L5.5 8.5L9.5 4" fill="none" stroke="#000" strokeWidth="2" />
        </svg>
      </span>
      <svg viewBox="2 2 18 18" fill="none" className="ml-0.5 size-4">{TREE_ICONS[row.icon]}</svg>
      <span className="ml-[5px] whitespace-nowrap text-black">{row.label}</span>
    </label>
  </li>
);

const Navigator = () => (
  <aside className="flex w-[348px] shrink-0 flex-col border-r border-[#a8acb5] bg-[#e6e9f0]">
    <div className="flex h-5 shrink-0 items-center bg-[#b9c0ca] pl-1 text-[#3f434b]">
      <h2 className="flex-1">Project Navigator - Results</h2>
      <button aria-label="Pin" className="flex h-4 w-[17px] items-center justify-center">
        <svg viewBox="0 0 9 9" className="size-[9px]" fill="none" stroke="#5d616a"><path d="M2.5 5V0.5H6.5V5M5.5 0.5V5M1 5.5H8M4.5 6V9" /></svg>
      </button>
      <button aria-label="Close" className="flex h-4 w-[17px] items-center justify-center">
        <svg viewBox="0 0 9 9" className="size-[9px]" fill="none" stroke="#5d616a" strokeWidth="1.5"><path d="M1 1L8 8M8 1L1 8" /></svg>
      </button>
    </div>
    <ul className="mx-0.5 mt-0.5 flex-1 bg-[#fcfcf3] pt-px pl-[3px]">
      {TREE.map((row) => (
        <TreeRow key={row.label} row={row} />
      ))}
    </ul>
  </aside>
);

const STATIONS = [
  [847, 460, 557], [865, 465, 555], [883, 469, 554], [902, 473, 554], [920, 477, 555],
  [938, 482, 557], [956, 486, 560], [974, 490, 563], [993, 495, 566],
];

const Scene = () => (
  <svg
    viewBox="354 98 845 772"
    preserveAspectRatio="xMinYMin slice"
    className="absolute inset-0 size-full"
    fontFamily="Liberation Sans, sans-serif"
    role="img"
    aria-label="Model with section results"
  >
    <g shapeRendering="crispEdges" fill="none">
      <path d="M354 98H464V254L424 275L354 259Z" fill="#ff4d00" />
      <path d="M354 259L464 284V488L354 463Z" fill="#ff5000" />
      <path d="M464 98H1011V212L1199 256V358L1011 315V805L464 676Z" fill="#ff5200" />
      <path d="M706 242L828 271V558L706 529Z" fill="#fff" />
      <path d="M1011 98H1199V256L1011 212Z" fill="#3a6fb3" />
      <path d="M1011 315L1199 358V522L1011 479Z" fill="#00f05f" />
      <path d="M354 463L464 488.5M464 676L1011 805M424 275L464 254" stroke="#7dff00" strokeWidth="1.5" />
      <path d="M463.5 98V676M1011 315V805" stroke="#9a3300" />
      <path d="M1011 98V212" stroke="#1c2f48" />
      <path d="M354 259L464 284M530 98L1199 256M1011 315L1199 358M1011 805L1199 849" stroke="#000" />
      <path d="M646.5 228V515" stroke="#5c1e00" />
      <path d="M646 228L829 271M646 515L829 558" stroke="#000" />
      <path d="M706.5 242V529M828.5 271V456" stroke="#7d6a60" />
      <path
        d="M829 456L1011 499V569L993 566L974 563L956 560L938 557L920 555L902 554L883 554L865 555L847 557L829 558Z"
        fill="#a1345c"
        stroke="#0000ff"
        strokeWidth="2"
      />
      {STATIONS.map(([x, top, bottom]) => (
        <path key={x} d={`M${x} ${top}V${bottom}`} stroke="#1400f0" strokeWidth="1.5" />
      ))}
      <path d="M829 456L672 539" stroke="#000" strokeDasharray="7 3 2 3" />
      <path d="M1011 499L902 556" stroke="#3d1040" strokeDasharray="7 3 2 3" />
      <path d="M902 556L854 582" stroke="#000" strokeDasharray="7 3 2 3" />
      <path d="M918 199H922V469H918Z" fill="#000" />
    </g>
    <path d="M915 468H925L920 476Z" />
    <path d="M665 543L670 537L674 541Z" />
    <path d="M847 586L853 579L856 584Z" />
    <text x="876" y="342" fontSize="14" fontWeight="bold">14.79</text>
    <text x="813" y="450" fontSize="10">Section</text>
    <rect x="791" y="562" width="34" height="13" fill="#7f2800" />
    <text x="794" y="572" fontSize="10" fontWeight="bold" fill="#401a9a">-18.54</text>
    <rect x="1013" y="573" width="34" height="13" fill="#808080" />
    <text x="1016" y="583" fontSize="10" fontWeight="bold" fill="#3a3ac8">-12.66</text>
    <g fill="none" strokeWidth="1.6">
      <path d="M1130.5 550V578" stroke="#ff0000" />
      <path d="M1130.5 550L1104 543" stroke="#00ff00" />
      <path d="M1130.5 550L1146 539" stroke="#0000ff" />
    </g>
    <path d="M1128 577H1134L1131 587Z" fill="#960000" />
    <path d="M1096 541L1106 540L1105 546Z" fill="#009600" />
    <path d="M1152 535L1144 537L1148 542Z" fill="#000096" />
    <text x="1086" y="544" fontSize="11" fill="#00e600">y</text>
    <text x="1155" y="538" fontSize="11" fill="#0000e6">z</text>
    <text x="1129" y="600" fontSize="11" fill="#ff0000">x</text>
  </svg>
);

const App = () => (
  <div className="flex h-screen flex-col overflow-hidden bg-[#cfd3dc] font-['Open_Sans','Noto_Sans',sans-serif] text-[11px]">
    <header className="flex h-5 shrink-0 items-center bg-white pl-0.5">
      <svg viewBox="0 0 16 16" className="size-4" fill="none">
        <path d="M2 5L7 1L12 1L15 5V10L11 14H8L5 9Z" fill="#6f8fb8" stroke="#35506f" />
        <path d="M5 3L9 8L8 13M8 1.5L12 6L11 13" stroke="#cfdef0" />
        <text x="1" y="14" fontSize="11" fontWeight="bold" fontFamily="Liberation Sans, sans-serif" fill="#f2c51d" stroke="#7c6412" strokeWidth="0.5">5</text>
      </svg>
      <h1 className="ml-[5px] text-black">RFEM 5.18.00 x64 - [CLT*]</h1>
    </header>

    <nav className="flex h-6 shrink-0 items-center text-[#4a4e58]">
      <Grip />
      <svg viewBox="0 0 16 13" className="mr-[10px] h-[13px] w-4" fill="none">
        <path d="M0 0H16V13H0Z" fill="#1c2566" />
        <path d="M0 9.5H16M5.5 3V12M10.5 3V12M0 8L5.5 3L8 6L10.5 3L16 8" stroke="#fff" />
      </svg>
      <div className="flex gap-4">
        {MENU.map(([before, key, after]) => (
          <button key={before + key + after}>
            {before}<span className="underline underline-offset-2">{key}</span>{after}
          </button>
        ))}
      </div>
    </nav>

    <div className="flex shrink-0">
      <Bar items={FILE_BAR} label="Standard" />
      <Bar items={PLANE_BAR} label="Work planes" />
      <Bar items={[]} label="More" />
    </div>
    <div className="flex shrink-0">
      <Bar items={INSERT_BAR} label="Insert" />
      <Bar items={VIEW_BAR} label="View" />
      <Bar items={RESULT_BAR} label="Results" />
    </div>

    <main className="flex min-h-0 flex-1">
      <Navigator />
      <section className="relative ml-[5px] min-w-0 flex-1 overflow-hidden border-t-2 border-l border-[#6d7077] bg-white">
        <Scene />
        <div className="relative pt-[5px] pl-1 font-['Liberation_Sans',sans-serif] text-[11px] leading-[14px] whitespace-nowrap text-black">
          <p>Basic Internal Forces n-x [kN/m]</p>
          <p>Sections</p>
          <p>CO4 : 1.35G + 1.5QiA + 0.75Qs + 0.9Qw1</p>
        </div>
      </section>
    </main>
  </div>
);

export default App;
